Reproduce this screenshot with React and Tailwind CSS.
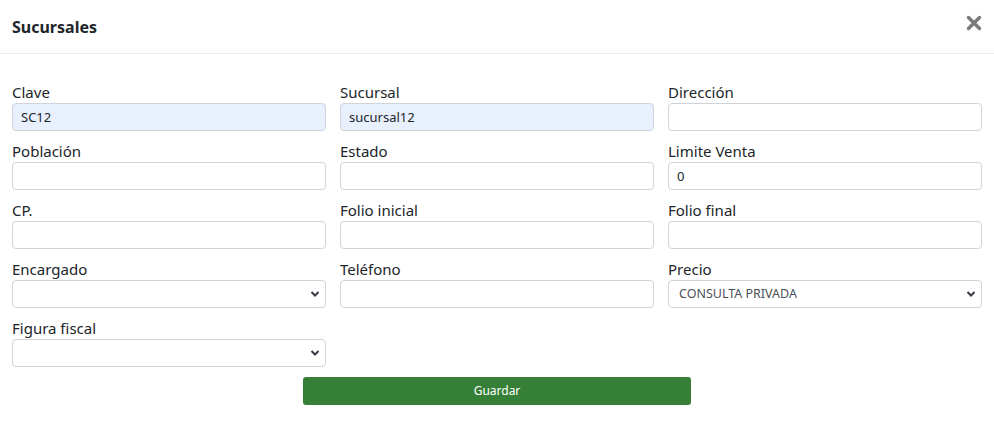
import React from "react";

const font = { fontFamily: '"Noto Sans", "Liberation Sans", sans-serif' };

function Field({ label, value = "", filled = false }) {
  return (
    <div className="flex flex-col">
      <label className="text-[15px] leading-[20px] text-[#212529] mb-px">{label}</label>
      <input
        type="text"
        defaultValue={value}
        className={
          "h-[28px] w-full rounded-[4px] border border-[#ced4da] px-2 text-[13px] text-[#212529] outline-none " +
          (filled ? "bg-[#e8f0fe]" : "bg-white")
        }
      />
    </div>
  );
}

function SelectField({ label, value = "" }) {
  return (
    <div className="flex flex-col">
      <label className="text-[15px] leading-[20px] text-[#212529] mb-px">{label}</label>
      <div className="relative h-[28px]">
        <select
          defaultValue={value}
          className="block h-[28px] w-full appearance-none rounded-[4px] border border-[#ced4da] bg-white pl-[10px] pr-6 text-[12.5px] text-[#495057] outline-none"
        >
          <option value={value}>{value}</option>
        </select>
        <svg
          className="pointer-events-none absolute right-[6px] top-[10px]"
          width="10"
          height="8"
          viewBox="0 0 10 8"
        >
          <path d="M1.5 2 L5 5.5 L8.5 2" fill="none" stroke="#343a40" strokeWidth="2" />
        </svg>
      </div>
    </div>
  );
}

export default function App() {
  return (
    <div className="w-[994px] h-[421px] bg-white" style={font}>
      <div className="flex h-[54px] items-center justify-between border-b border-[#e9ecef] px-3">
        <h5 className="text-[16px] font-bold text-[#212529]">Sucursales</h5>
        <button className="-mt-[8px]" aria-label="Cerrar">
          <svg width="16" height="16" viewBox="0 0 16 16">
            <path d="M2.5 2.5 L13.5 13.5 M13.5 2.5 L2.5 13.5" stroke="#7a7a7a" strokeWidth="3.4" strokeLinecap="round" />
          </svg>
        </button>
      </div>
      <div className="px-3 pt-[28px]">
        <div className="grid grid-cols-3 gap-x-[14px] gap-y-[10px]">
          <Field label="Clave" value="SC12" filled />
          <Field label="Sucursal" value="sucursal12" filled />
          <Field label="Dirección" />
          <Field label="Población" />
          <Field label="Estado" />
          <Field label="Limite Venta" value="0" />
          <Field label="CP." />
          <Field label="Folio inicial" />
          <Field label="Folio final" />
          <SelectField label="Encargado" />
          <Field label="Teléfono" />
          <SelectField label="Precio" value="CONSULTA PRIVADA" />
          <SelectField label="Figura fiscal" />
        </div>
        <div className="mt-[10px] flex justify-center">
          <button className="h-[28px] w-[388px] rounded-[3px] bg-[#367f37] text-[12px] text-white">
            Guardar
          </button>
        </div>
      </div>
    </div>
  );
}
